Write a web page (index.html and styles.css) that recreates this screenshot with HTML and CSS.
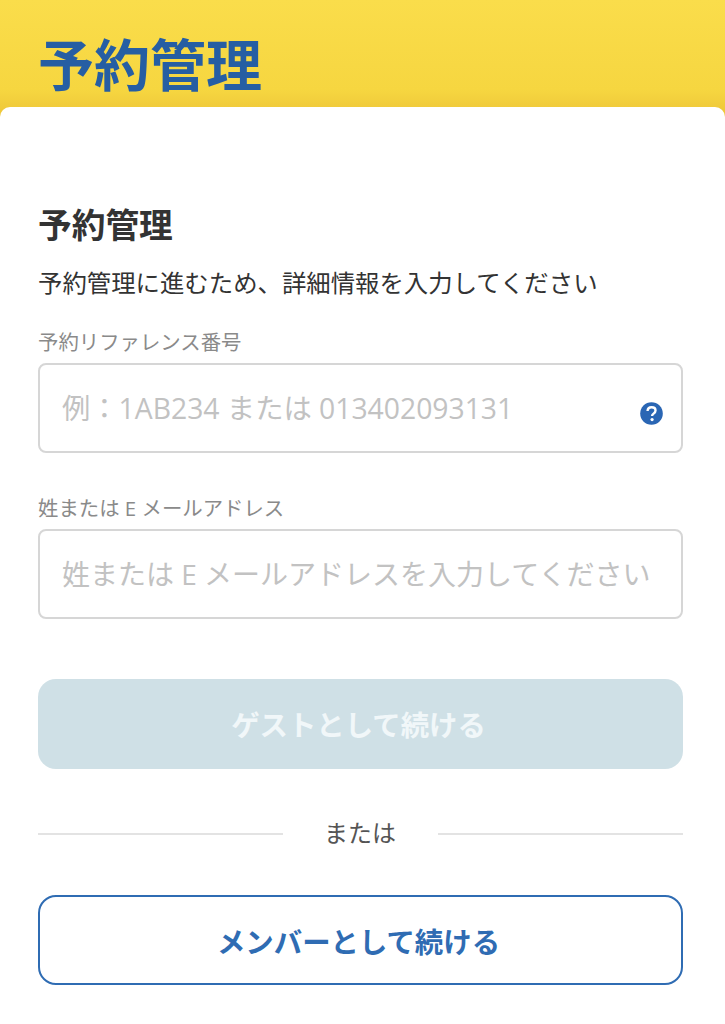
FILE: index.html
```html
<!DOCTYPE html>
<html lang="ja">
<head>
<meta charset="utf-8">
<title>予約管理</title>
<link rel="stylesheet" href="styles.css">
</head>
<body>
<header class="hero"><h1 class="hero-title">予約管理</h1></header>
<main class="card">
  <h2 class="card-title">予約管理</h2>
  <p class="intro">予約管理に進むため、詳細情報を入力してください</p>
  <form class="form">
    <div class="field field-first">
      <label class="label">予約リファレンス番号</label>
      <div class="input">
        <span class="placeholder">例：1AB234 または 013402093131</span>
        <svg class="help" viewBox="0 0 24 24" width="23" height="23" aria-hidden="true"><circle cx="12" cy="12" r="11.8" fill="#2a66b4"/><path d="M7.9 9.4c.1-2.5 1.9-3.9 4.2-3.9 2.4 0 4.1 1.4 4.1 3.4 0 1.6-.9 2.4-2 3.2-1 .7-1.6 1.2-1.6 2.6" fill="none" stroke="#fff" stroke-width="2.5"/><circle cx="12.6" cy="18.3" r="1.7" fill="#fff"/></svg>
      </div>
    </div>
    <div class="field field-second">
      <label class="label">姓または E メールアドレス</label>
      <div class="input">
        <span class="placeholder placeholder-long">姓または E メールアドレスを入力してください</span>
      </div>
    </div>
    <button type="button" class="btn btn-guest">ゲストとして続ける</button>
    <div class="divider"><span class="rule"></span><span class="or">または</span><span class="rule"></span></div>
    <button type="button" class="btn btn-member">メンバーとして続ける</button>
  </form>
</main>
</body>
</html>
```
FILE: styles.css
```css
* { box-sizing: border-box; }
html, body { margin: 0; padding: 0; }
body {
  width: 725px;
  height: 1024px;
  overflow: hidden;
  background: linear-gradient(#fadd4b 0, #f6d640 90px, #efc93a 110px);
  font-family: "Open Sans", "Noto Sans CJK JP", sans-serif;
}
.hero { height: 107px; padding: 26px 38px 0; }
.hero-title {
  margin: 0;
  font: 700 56px/72px "Noto Sans CJK JP", sans-serif;
  color: #265ea3;
}
.card {
  height: 917px;
  background: #fff;
  border-radius: 10px 10px 0 0;
  padding: 95px 42px 0 38px;
}
.card-title {
  margin: 0;
  font: 700 33.7px/44px "Noto Sans CJK JP", sans-serif;
  color: #333;
}
.intro {
  margin: 18px 0 0;
  font: 400 24.4px/36px "Noto Sans CJK JP", sans-serif;
  color: #333;
  white-space: nowrap;
}
.form { display: flex; flex-direction: column; }
.label {
  display: block;
  font-size: 20.4px;
  line-height: 28px;
  color: #8a8a8a;
  white-space: nowrap;
}
.field-first { margin-top: 28px; }
.field-second { margin-top: 41px; }
.input {
  display: flex;
  align-items: center;
  justify-content: space-between;
  height: 90px;
  margin-top: 7px;
  padding: 0 18px 0 22px;
  border: 2px solid #d6d6d6;
  border-radius: 8px;
  background: #fff;
}
.placeholder {
  font-size: 28.3px;
  line-height: 40px;
  color: #c2c2c2;
  white-space: nowrap;
}
.placeholder-long { font-size: 28px; }
.help { flex: none; margin-top: 10px; }
.btn {
  display: block;
  width: 100%;
  height: 90px;
  border-radius: 18px;
  font: 700 28.4px/40px "Noto Sans CJK JP", sans-serif;
  padding: 0 4px 0 0;
}
.btn-guest {
  margin-top: 60px;
  border: 0;
  background: #cfe0e6;
  color: #f1f7f9;
}
.divider {
  display: flex;
  align-items: center;
  height: 40px;
  margin-top: 45px;
}
.rule { flex: 1; height: 2px; background: #e3e3e3; }
.or {
  width: 155px;
  margin-bottom: 4px;
  padding-right: 1px;
  text-align: center;
  font: 400 24px/36px "Noto Sans CJK JP", sans-serif;
  color: #555;
}
.btn-member {
  margin-top: 41px;
  padding-top: 2px;
  border: 2px solid #2f6cb3;
  background: #fff;
  color: #2f6cb3;
}
```
